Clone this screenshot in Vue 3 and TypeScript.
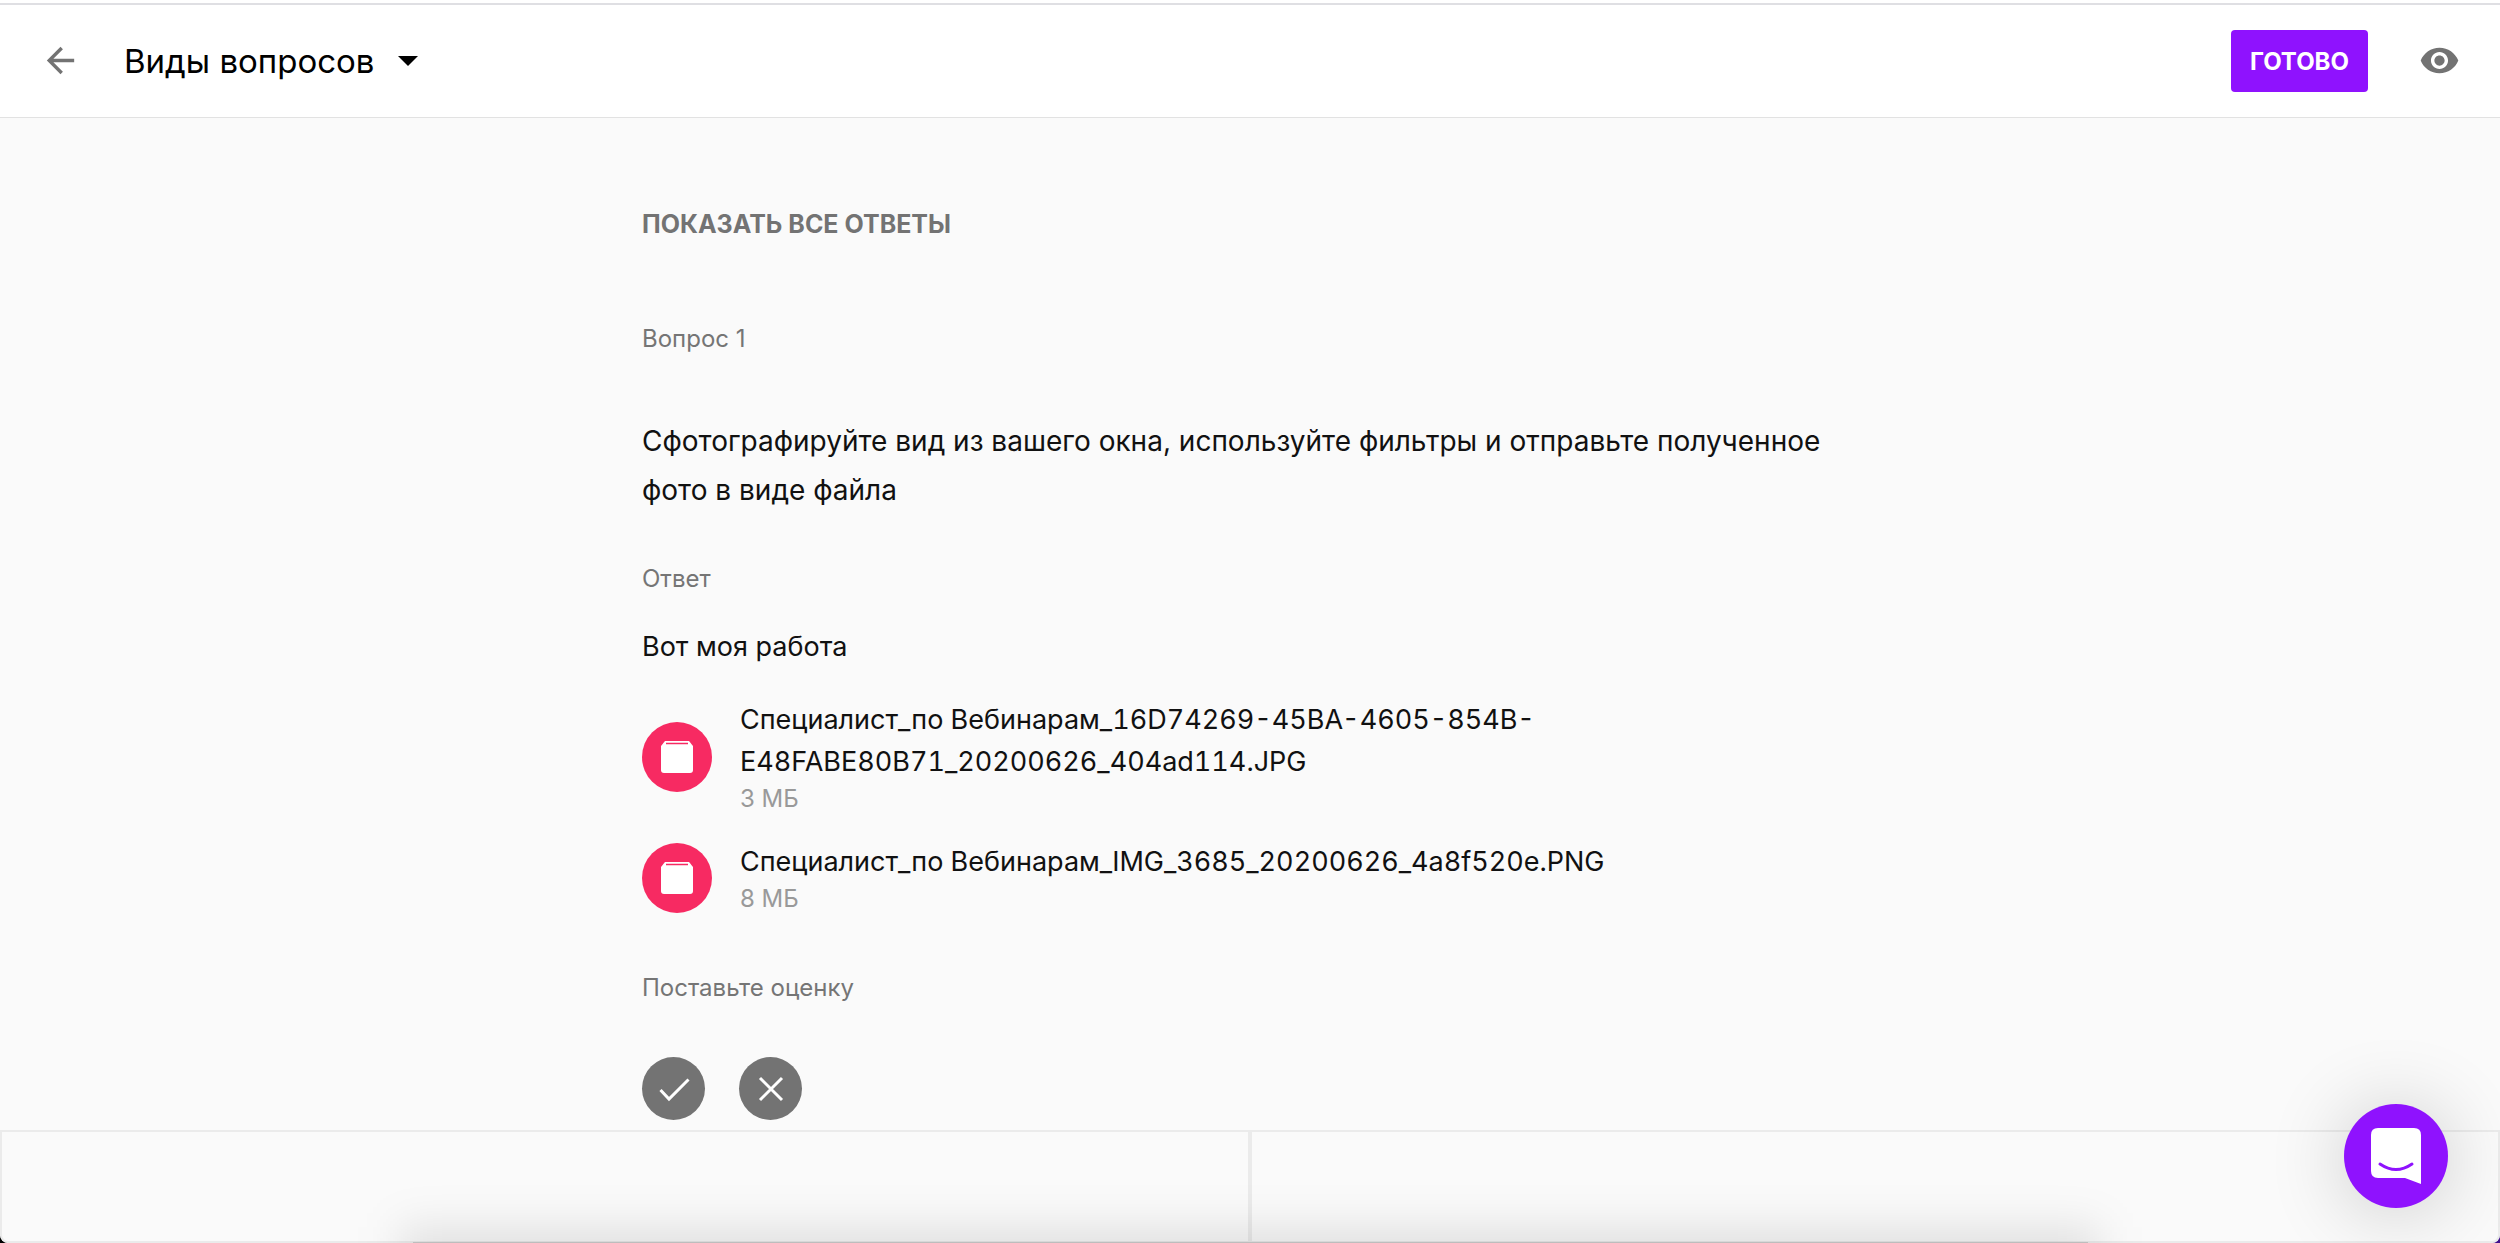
<script setup lang="ts">
interface Attachment {
  name: string
  size: string
}

const title = 'Виды вопросов'
const attachments: Attachment[] = [
  { name: 'Специалист_по Вебинарам_16D74269-45BA-4605-854B-E48FABE80B71_20200626_404ad114.JPG', size: '3 МБ' },
  { name: 'Специалист_по Вебинарам_IMG_3685_20200626_4a8f520e.PNG', size: '8 МБ' },
]
</script>

<template>
  <div class="page">
    <header class="topbar">
      <button class="icon-button" type="button" aria-label="Назад">
        <svg class="icon" viewBox="0 0 24 24" aria-hidden="true">
          <path d="M20 11H7.83l5.59-5.59L12 4l-8 8 8 8 1.41-1.41L7.83 13H20v-2z" />
        </svg>
      </button>
      <button class="title" type="button">
        <span>{{ title }}</span>
        <svg class="caret" viewBox="0 0 20 10" aria-hidden="true"><path d="M0 0h20L10 10z" /></svg>
      </button>
      <button class="done" type="button">ГОТОВО</button>
      <button class="icon-button" type="button" aria-label="Просмотр">
        <svg class="icon" viewBox="0 0 24 24" aria-hidden="true">
          <path d="M12 4.5C7 4.5 2.73 7.61 1 12c1.73 4.39 6 7.5 11 7.5s9.27-3.11 11-7.5c-1.73-4.39-6-7.5-11-7.5zM12 17c-2.76 0-5-2.24-5-5s2.24-5 5-5 5 2.24 5 5-2.24 5-5 5zm0-8c-1.66 0-3 1.34-3 3s1.34 3 3 3 3-1.34 3-3-1.34-3-3-3z" />
        </svg>
      </button>
    </header>

    <main class="content">
      <button class="show-all" type="button">ПОКАЗАТЬ ВСЕ ОТВЕТЫ</button>
      <h2 class="label">Вопрос 1</h2>
      <p class="question">Сфотографируйте вид из вашего окна, используйте фильтры и отправьте полученное фото в виде файла</p>
      <h3 class="label">Ответ</h3>
      <p class="answer">Вот моя работа</p>
      <ul class="files">
        <li v-for="file in attachments" :key="file.name" class="file">
          <svg class="file-icon" viewBox="0 0 70 70" aria-hidden="true">
            <circle cx="35" cy="35" r="35" fill="#f72a62" />
            <path d="M23 19h24l4 5v24q0 3-3 3H22q-3 0-3-3V24z" fill="#fff" />
            <path d="M24 21.500h22" stroke="#f72a62" stroke-width="1.500" />
          </svg>
          <div class="file-text">
            <a class="file-name" href="#">{{ file.name }}</a>
            <span class="file-size">{{ file.size }}</span>
          </div>
        </li>
      </ul>
      <h3 class="label">Поставьте оценку</h3>
      <div class="marks">
        <button class="mark" type="button" aria-label="Верно">
          <svg viewBox="0 0 62 62" aria-hidden="true"><path d="M17.500 32l8.500 9 19.500-19.500" /></svg>
        </button>
        <button class="mark" type="button" aria-label="Неверно">
          <svg viewBox="0 0 62 62" aria-hidden="true"><path d="M20 20l22 22M42 20L20 42" /></svg>
        </button>
      </div>
    </main>

    <footer class="pager">
      <div class="pager-cell"></div>
      <div class="pager-cell"></div>
    </footer>
    <div class="dock-shadow"></div>
    <div class="dock-edge"></div>

    <button class="chat" type="button" aria-label="Чат">
      <svg viewBox="0 0 104 104" aria-hidden="true">
        <path d="M34 24h36q7 0 7 7v49l-16-6H34q-7 0-7-7V31q0-7 7-7z" fill="#fff" />
        <path d="M36 60q16 11 32 0" fill="none" stroke="#8f12fe" stroke-width="3" stroke-linecap="round" />
      </svg>
    </button>
  </div>
</template>

<style>
body {
  margin: 0;
  background: linear-gradient(90deg, #000 50%, #40108c 50%);
}
</style>

<style scoped>
.page {
  position: relative;
  display: flex;
  flex-direction: column;
  min-height: 100vh;
  overflow: hidden;
  border-radius: 0 0 8px 8px;
  background: #fafafa;
  color: #111;
  font-family: Inter, "Liberation Sans", sans-serif;
  font-size: 27px;
}

button {
  display: flex;
  align-items: center;
  justify-content: center;
  padding: 0;
  border: 0;
  background: none;
  color: inherit;
  font: inherit;
  cursor: pointer;
}

.topbar {
  display: flex;
  align-items: center;
  height: 112px;
  padding: 0 40px;
  border-top: 2px solid #dfdfe3;
  border-bottom: 1px solid #e2e2e2;
  margin-top: 3px;
  box-shadow: 0 -3px #fff;
  background: #fff;
}

.icon {
  display: block;
  width: 41px;
  height: 41px;
  fill: #737373;
}

.icon-button {
  padding-bottom: 2px;
}

.title {
  gap: 23px;
  margin: 0 auto 0 43px;
  color: #000;
  font-size: 33px;
  line-height: 40px;
}

.caret {
  width: 20px;
  height: 10px;
}

.done {
  height: 62px;
  margin-right: 51px;
  padding: 0 19px;
  border-radius: 4px;
  background: #8f12fe;
  color: #fff;
  font-size: 24px;
  font-weight: 700;
}

.content {
  flex: 1;
  box-sizing: border-box;
  width: 100%;
  max-width: 1216px;
  margin: 0 auto;
  padding: 90px 0 10px;
}

.show-all {
  margin-bottom: 83px;
  color: #737373;
  font-size: 25px;
  font-weight: 700;
  line-height: 32px;
}

.label {
  margin: 0;
  color: #757575;
  font-size: 24px;
  font-weight: 400;
  line-height: 32px;
}

.question {
  margin: 62px 0 48px;
  font-size: 28px;
  line-height: 49px;
}

.answer {
  margin: 31px 0;
  line-height: 42px;
}

.files {
  display: flex;
  flex-direction: column;
  gap: 26px;
  margin: 0 0 57px;
  padding: 0;
  list-style: none;
}

.file {
  display: flex;
  align-items: center;
  gap: 28px;
}

.file-icon {
  flex: none;
  width: 70px;
  height: 70px;
}

.file-text {
  display: flex;
  flex-direction: column;
  max-width: 900px;
}

.file-name {
  color: inherit;
  font-variant-numeric: tabular-nums;
  line-height: 42px;
  text-decoration: none;
}

.file-size {
  color: #999;
  font-size: 24px;
  line-height: 32px;
}

.marks {
  display: flex;
  gap: 34px;
  margin-top: 53px;
}

.mark {
  width: 63px;
  height: 63px;
  border-radius: 50%;
  background: #737373;
}

.mark svg {
  width: 62px;
  height: 62px;
  fill: none;
  stroke: #fff;
  stroke-width: 3;
}

.pager {
  display: flex;
  height: 113px;
}

.pager-cell {
  flex: 1;
  border: 2px solid #ebebeb;
}

.pager-cell:first-child {
  border-bottom-left-radius: 8px;
}

.pager-cell:last-child {
  border-bottom-right-radius: 8px;
}

.dock-shadow {
  position: absolute;
  right: 16%;
  bottom: -120px;
  left: 16%;
  height: 136px;
  background: rgba(0, 0, 0, 0.1);
  filter: blur(22px);
  pointer-events: none;
}

.dock-edge {
  position: absolute;
  right: 16.5%;
  bottom: 0;
  left: 16.5%;
  height: 1px;
  background: #bdbdbd;
}

.chat {
  position: absolute;
  right: 52px;
  bottom: 35px;
  width: 104px;
  height: 104px;
  border-radius: 50%;
  background: #8f12fe;
  box-shadow: 0 4px 80px rgba(0, 0, 0, 0.2);
}

.chat svg {
  width: 104px;
  height: 104px;
}
</style>
